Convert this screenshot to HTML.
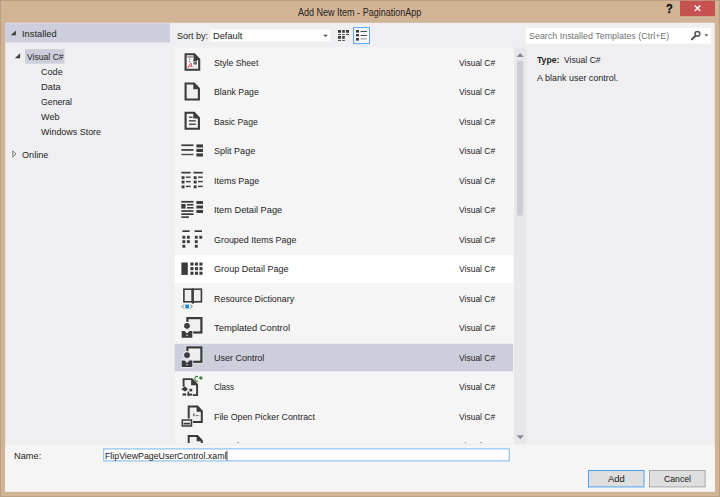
<!DOCTYPE html>
<html><head><meta charset="utf-8"><title>Add New Item</title>
<style>
html,body{margin:0;padding:0;background:#d1b496;}
body{width:720px;height:497px;overflow:hidden;font-family:"Liberation Sans",sans-serif;}
#win{position:relative;width:720px;height:497px;background:#d1b496;overflow:hidden;}
#win div,#win span,#win svg{position:absolute;}
.t{white-space:nowrap;transform-origin:0 0;line-height:12px;font-family:"Liberation Sans",sans-serif;}
#edge{left:0;top:0;width:718px;height:495px;border:1px solid #b9a084;}
#clip13{left:0;top:0;width:720px;height:443.1px;overflow:hidden;}
#help{left:666.1px;top:2.2px;transform-origin:0 0;transform:scaleX(0.88);font-size:12.5px;font-weight:700;-webkit-text-stroke:0.3px #111;line-height:14px;color:#0a0a0a;font-family:"Liberation Sans",sans-serif;}

</style></head>
<body>
<div id="win">
<div id="edge"></div>
<svg id="bg" width="720" height="497" viewBox="0 0 720 497" style="left:0;top:0">
<rect x="5.3" y="22.8" width="709.4" height="468.8" fill="#efeff2"/>
<rect x="680" y="0.8" width="35" height="15.3" fill="#c75050"/>
<rect x="5.3" y="23.3" width="164.8" height="19.2" fill="#cccedb"/>
<rect x="25" y="49.1" width="39.4" height="14.6" fill="#cccedb"/>
<rect x="174.8" y="47.7" width="339.2" height="396" fill="#f5f5f5"/>
<rect x="174.8" y="255.2" width="338.3" height="27.6" fill="#ffffff"/>
<rect x="174.8" y="343.8" width="338.3" height="27.6" fill="#cccedb"/>
<rect x="514" y="47.7" width="12.4" height="396" fill="#e8e8ec"/>
<rect x="517.1" y="60.8" width="6" height="154.8" fill="#cbccd4"/>
<rect x="210.3" y="29.3" width="120.1" height="12.2" fill="#fdfdfd"/>
<rect x="525.9" y="27.9" width="185.1" height="15.8" fill="#ffffff"/>
<rect x="353.5" y="27.6" width="16" height="16" fill="#f7f8fa" stroke="#5aa6f3" stroke-width="1"/>
<rect x="5.3" y="444.9" width="709.4" height="46.7" fill="#f5f5f5"/>
<rect x="103.75" y="448.9" width="405.45" height="12" fill="#ffffff" stroke="#7ab6ef" stroke-width="1"/>
<rect x="226.5" y="450.7" width="0.9" height="9.8" fill="#333"/>
<rect x="588.5" y="470.5" width="55.5" height="16.4" fill="#dedede" stroke="#4fa2f2" stroke-width="1"/>
<rect x="649.5" y="470.5" width="55.6" height="16.4" fill="#dedede" stroke="#a9a9a9" stroke-width="1"/>
</svg>
<svg id="ico" width="720" height="497" viewBox="0 0 720 497" style="left:0;top:0">
<!-- tree arrows -->
<polygon points="15.9,30.4 15.9,35.3 10.7,35.3" fill="#3d3d3d"/>
<polygon points="20.1,53.2 20.1,58.3 14.9,58.3" fill="#3d3d3d"/>
<polygon points="12.8,151 16,154 12.8,157" fill="none" stroke="#6a6a6a" stroke-width="0.9"/>
<!-- close X -->
<path d="M694.8 5.6 L700.3 10.9 M700.3 5.6 L694.8 10.9" stroke="#ffffff" stroke-width="1.4" fill="none"/>
<!-- combo arrow -->
<polygon points="323.2,34.7 327.8,34.7 325.5,37.1" fill="#444"/>
<!-- small icons view -->
<g fill="#3c3c3c">
<rect x="338" y="30" width="3" height="2.8"/><rect x="342.2" y="30" width="2.6" height="2.8"/><rect x="346" y="30" width="3" height="2.8"/>
<rect x="338" y="34" width="3" height="0.9"/><rect x="342.2" y="34" width="2.6" height="0.9"/><rect x="346" y="34" width="3" height="0.9"/>
<rect x="338" y="36" width="3" height="2.8"/><rect x="342.2" y="36" width="2.6" height="2.8"/>
<rect x="338" y="40" width="3" height="0.9"/><rect x="342.2" y="40" width="2.6" height="0.9"/>
</g>
<!-- list view icon -->
<g fill="#3c3c3c">
<rect x="356" y="30" width="3" height="2.6"/><rect x="356" y="34" width="3" height="2.4"/><rect x="356" y="38" width="3" height="2.6"/>
<rect x="360.5" y="31" width="6.5" height="0.9"/><rect x="360.5" y="35" width="6.5" height="0.9"/>
<rect x="360.5" y="38.4" width="6.5" height="1" fill="#999"/>
</g>
<!-- search magnifier -->
<circle cx="697.4" cy="33.8" r="2.4" fill="none" stroke="#555" stroke-width="1.5"/>
<path d="M695.6 35.7 L691.9 39.3" stroke="#555" stroke-width="2.0" stroke-linecap="round"/>
<polygon points="704.4,34.2 708.4,34.2 706.4,36.7" fill="#666"/>
<!-- scroll arrows -->
<polygon points="516.6,57.1 523.8,57.1 520.2,52.9" fill="#868999"/>
<polygon points="516.7,435.2 523.9,435.2 520.3,439.3" fill="#868999"/>
</svg>
<svg id="rico" width="720" height="497" viewBox="0 0 720 497" style="left:0;top:0">
<path d="M185.6 54.2 H194.4 L199.2 59.3 V69.8 H185.6 Z" fill="#fbfbfb" stroke="#3b3b3b" stroke-width="2.1" stroke-linejoin="miter"/>
<path d="M193.6 53.6 L199.7 60.0 H193.6 Z" fill="#3b3b3b"/>
<rect x="187.3" y="56.4" width="6.2" height="1.1" fill="#666"/>
<rect x="189.2" y="58.4" width="1.0" height="1.6" fill="#777"/>
<rect x="189.2" y="60.8" width="1.0" height="1.8" fill="#777"/>
<rect x="193.2" y="59.6" width="4.0" height="1.4" fill="#3f3f3f"/>
<rect x="193.4" y="61.4" width="3.6" height="3.2" fill="#6a6a6a"/>
<rect x="193.2" y="65.8" width="4.0" height="0.6" fill="#c8c8c8"/>
<rect x="193.2" y="67.4" width="4.0" height="0.5" fill="#d5d5d5"/>
<path d="M188.0 67.4 L190.9 63.0 L192.2 67.4 M189.2 66 H191.8" fill="none" stroke="#d8505a" stroke-width="1.0"/>
<rect x="187.4" y="66.6" width="1.6" height="1.0" fill="#e06a70"/>
<path d="M185.6 83.5 H194.1 L198.9 88.6 V99.5 H185.6 Z" fill="#f0f0f0" stroke="#3b3b3b" stroke-width="2.1" stroke-linejoin="miter"/>
<path d="M193.3 82.9 L199.4 89.3 H193.3 Z" fill="#3b3b3b"/>
<path d="M185.6 112.8 H194.1 L198.9 117.9 V128.8 H185.6 Z" fill="#f4f4f4" stroke="#3b3b3b" stroke-width="2.1" stroke-linejoin="miter"/>
<path d="M193.3 112.2 L199.4 118.6 H193.3 Z" fill="#3b3b3b"/>
<rect x="189.0" y="116.6" width="3.6" height="1.3" fill="#3b3b3b"/>
<rect x="189.0" y="120.2" width="6.8" height="1.3" fill="#3b3b3b"/>
<rect x="189.0" y="123.6" width="6.8" height="1.3" fill="#3b3b3b"/>
<rect x="181.3" y="144.4" width="12.2" height="1.7" fill="#3b3b3b"/>
<rect x="181.3" y="149.1" width="12.2" height="1.7" fill="#3b3b3b"/>
<rect x="181.3" y="153.8" width="12.2" height="1.4" fill="#4a4a4a"/>
<rect x="196.4" y="144.4" width="6.6" height="3.1" fill="#3b3b3b"/>
<rect x="196.4" y="148.9" width="6.6" height="3.1" fill="#3b3b3b"/>
<rect x="196.4" y="153.4" width="6.6" height="3.1" fill="#3b3b3b"/>
<rect x="181.3" y="171.8" width="9.4" height="1.7" fill="#3b3b3b"/>
<rect x="181.6" y="176.2" width="2.9" height="2.9" fill="#3b3b3b"/>
<rect x="185.9" y="176.5" width="4.8" height="1.4" fill="#3b3b3b"/>
<rect x="181.6" y="180.6" width="2.9" height="2.9" fill="#3b3b3b"/>
<rect x="185.9" y="180.9" width="4.8" height="1.4" fill="#3b3b3b"/>
<rect x="181.6" y="185.4" width="2.9" height="2.9" fill="#3b3b3b"/>
<rect x="185.9" y="185.7" width="4.8" height="1.4" fill="#3b3b3b"/>
<rect x="193.4" y="171.8" width="9.4" height="1.7" fill="#3b3b3b"/>
<rect x="193.7" y="176.2" width="2.9" height="2.9" fill="#3b3b3b"/>
<rect x="198.0" y="176.5" width="4.8" height="1.4" fill="#3b3b3b"/>
<rect x="193.7" y="180.6" width="2.9" height="2.9" fill="#3b3b3b"/>
<rect x="198.0" y="180.9" width="4.8" height="1.4" fill="#3b3b3b"/>
<rect x="193.7" y="185.4" width="2.9" height="2.9" fill="#3b3b3b"/>
<rect x="198.0" y="185.7" width="4.8" height="1.4" fill="#3b3b3b"/>
<rect x="181.3" y="200.9" width="12.2" height="1.8" fill="#3b3b3b"/>
<rect x="181.3" y="204.0" width="4.3" height="4.6" fill="#3b3b3b"/>
<rect x="187.0" y="204.0" width="6.5" height="1.6" fill="#3b3b3b"/>
<rect x="187.0" y="207.0" width="6.5" height="1.6" fill="#3b3b3b"/>
<rect x="181.3" y="210.2" width="12.2" height="1.7" fill="#3b3b3b"/>
<rect x="181.3" y="213.3" width="12.2" height="1.7" fill="#3b3b3b"/>
<rect x="181.3" y="216.3" width="7.6" height="1.6" fill="#3b3b3b"/>
<rect x="196.4" y="201.0" width="6.6" height="3.0" fill="#3b3b3b"/>
<rect x="196.4" y="205.5" width="6.6" height="3.0" fill="#3b3b3b"/>
<rect x="196.4" y="210.0" width="6.6" height="3.0" fill="#3b3b3b"/>
<rect x="182.4" y="230.3" width="7.2" height="1.7" fill="#3b3b3b"/>
<rect x="194.6" y="230.3" width="7.4" height="1.7" fill="#3b3b3b"/>
<rect x="182.4" y="235.8" width="2.9" height="2.9" fill="#3b3b3b"/>
<rect x="186.9" y="235.8" width="2.9" height="2.9" fill="#3b3b3b"/>
<rect x="182.4" y="240.2" width="2.9" height="2.9" fill="#3b3b3b"/>
<rect x="186.9" y="240.2" width="2.9" height="2.9" fill="#3b3b3b"/>
<rect x="182.4" y="244.8" width="2.9" height="2.9" fill="#3b3b3b"/>
<rect x="194.8" y="235.8" width="2.9" height="2.9" fill="#3b3b3b"/>
<rect x="199.3" y="235.8" width="2.9" height="2.9" fill="#3b3b3b"/>
<rect x="194.8" y="240.2" width="2.9" height="2.9" fill="#3b3b3b"/>
<rect x="194.8" y="244.8" width="2.9" height="2.9" fill="#3b3b3b"/>
<rect x="181.4" y="262.5" width="6.4" height="12.4" fill="#3b3b3b"/>
<rect x="190.4" y="262.5" width="3.1" height="3.1" fill="#3b3b3b"/>
<rect x="190.4" y="267.1" width="3.1" height="3.1" fill="#3b3b3b"/>
<rect x="190.4" y="271.7" width="3.1" height="3.1" fill="#3b3b3b"/>
<rect x="194.9" y="262.5" width="3.1" height="3.1" fill="#3b3b3b"/>
<rect x="194.9" y="267.1" width="3.1" height="3.1" fill="#3b3b3b"/>
<rect x="194.9" y="271.7" width="3.1" height="3.1" fill="#3b3b3b"/>
<rect x="199.4" y="262.5" width="3.1" height="3.1" fill="#3b3b3b"/>
<rect x="199.4" y="267.1" width="3.1" height="3.1" fill="#3b3b3b"/>
<rect x="199.4" y="271.7" width="3.1" height="3.1" fill="#3b3b3b"/>
<rect x="183.9" y="289.2" width="8.4" height="12.6" fill="#efefef" stroke="#3b3b3b" stroke-width="1.6"/>
<rect x="192.9" y="289.2" width="8.5" height="12.6" fill="#efefef" stroke="#3b3b3b" stroke-width="1.6"/>
<rect x="191.7" y="288.6" width="1.9" height="14.6" fill="#3b3b3b"/>
<path d="M191.6 302 L194.6 302 L193 304.2 Z" fill="#3b3b3b"/>
<rect x="185.2" y="304.6" width="3.8" height="3.8" fill="#1a8ad8"/>
<path d="M183.9 304.6 L182 306.5 L183.9 308.4 M190.3 304.6 L192.2 306.5 L190.3 308.4" fill="none" stroke="#555" stroke-width="0.9"/>
<rect x="187.4" y="318.1" width="14" height="14.4" fill="#efefef" stroke="#3b3b3b" stroke-width="2.2"/>
<circle cx="187" cy="325.8" r="4.0" fill="#f5f5f5"/>
<rect x="180.8" y="329.6" width="12.4" height="9.1" fill="#f5f5f5"/>
<circle cx="187" cy="325.8" r="2.9" fill="#3b3b3b"/>
<path d="M181.7 331.1 H184.6 L187 333.6 L189.4 331.1 H192.3 V337.8 H181.7 Z" fill="#3b3b3b"/>
<rect x="186.4" y="334.7" width="1.3" height="1.3" fill="#e8e8e8"/>
<rect x="185.5" y="345.5" width="17.8" height="18.2" fill="#e4e5ec"/>
<rect x="187.4" y="347.4" width="14" height="14.4" fill="#efefef" stroke="#3b3b3b" stroke-width="2.2"/>
<circle cx="187" cy="355.1" r="4.0" fill="#e4e5ec"/>
<rect x="180.8" y="358.9" width="12.4" height="9.1" fill="#e4e5ec"/>
<circle cx="187" cy="355.1" r="2.9" fill="#3b3b3b"/>
<path d="M181.7 360.4 H184.6 L187 362.9 L189.4 360.4 H192.3 V367.1 H181.7 Z" fill="#3b3b3b"/>
<rect x="186.4" y="364.0" width="1.3" height="1.3" fill="#e8e8e8"/>
<path d="M183.6 379.1 H191.9 L197.1 384.6 V395.1 H183.6 Z" fill="#f0f0f0" stroke="#3b3b3b" stroke-width="1.9" stroke-linejoin="miter"/>
<path d="M191.1 378.5 L197.6 385.3 H191.1 Z" fill="#3b3b3b"/>
<rect x="181.0" y="386.6" width="11.8" height="9.9" fill="#f5f5f5"/>
<path d="M181.3 389.2 L185 386.2 L188 389.2 L185 391.6 Z" fill="#3b3b3b"/>
<rect x="182.6" y="393.4" width="3.6" height="2.2" fill="#3b3b3b"/>
<rect x="187.6" y="391.6" width="1.5" height="4.2" fill="#3b3b3b"/>
<rect x="187.6" y="393.6" width="4.6" height="2.0" fill="#3b3b3b"/>
<rect x="189.4" y="388.8" width="2.8" height="2.6" fill="#3b3b3b"/>
<path d="M198.0 376.9 A2.0 2.5 0 1 0 198.0 380.9" fill="none" stroke="#38883a" stroke-width="1.1"/>
<circle cx="200.9" cy="378" r="1.7" fill="#38883a"/>
<path d="M188.7 406.4 H197.4 L201.8 411.1 V422.1 H188.7 Z" fill="#f0f0f0" stroke="#3b3b3b" stroke-width="2.0" stroke-linejoin="miter"/>
<path d="M196.6 405.8 L202.3 411.8 H196.6 Z" fill="#3b3b3b"/>
<rect x="193.0" y="413.6" width="1.6" height="2.6" fill="#777"/>
<rect x="195.6" y="415.0" width="3.2" height="1.1" fill="#888"/>
<rect x="180.6" y="418.4" width="12.4" height="8.8" fill="#f5f5f5"/>
<rect x="182.3" y="420.0" width="9.2" height="6" fill="#f3f3f3" stroke="#3b3b3b" stroke-width="1.5"/>
<rect x="183.6" y="422.8" width="6.6" height="1.7" fill="#3b3b3b"/>
</svg>

<span class="t" style="left:298.20px;top:5.5px;font-size:10.5px;transform:scaleX(0.8586);color:#28231d;font-weight:400;">Add New Item - PaginationApp</span>
<span class="t" style="left:22.12px;top:27.9px;font-size:9.5px;transform:scaleX(0.9778);color:#242424;font-weight:400;">Installed</span>
<span class="t" style="left:26.57px;top:50.9px;font-size:9.5px;transform:scaleX(0.9043);color:#242424;font-weight:400;">Visual C#</span>
<span class="t" style="left:40.62px;top:65.9px;font-size:9.5px;transform:scaleX(0.9563);color:#242424;font-weight:400;">Code</span>
<span class="t" style="left:40.66px;top:80.9px;font-size:9.5px;transform:scaleX(0.9818);color:#242424;font-weight:400;">Data</span>
<span class="t" style="left:40.64px;top:95.9px;font-size:9.5px;transform:scaleX(0.9191);color:#242424;font-weight:400;">General</span>
<span class="t" style="left:41.30px;top:110.9px;font-size:9.5px;transform:scaleX(0.9579);color:#242424;font-weight:400;">Web</span>
<span class="t" style="left:41.30px;top:125.9px;font-size:9.5px;transform:scaleX(0.9402);color:#242424;font-weight:400;">Windows Store</span>
<span class="t" style="left:22.42px;top:148.9px;font-size:9.5px;transform:scaleX(0.9585);color:#242424;font-weight:400;">Online</span>
<span class="t" style="left:177.03px;top:29.9px;font-size:9.5px;transform:scaleX(0.9460);color:#242424;font-weight:400;">Sort by:</span>
<span class="t" style="left:213.27px;top:29.9px;font-size:9.5px;transform:scaleX(0.9744);color:#242424;font-weight:400;">Default</span>
<span class="t" style="left:529.13px;top:29.9px;font-size:9.5px;transform:scaleX(0.9380);color:#747474;font-weight:400;">Search Installed Templates (Ctrl+E)</span>
<span class="t" style="left:536.70px;top:53.9px;font-size:9.5px;transform:scaleX(0.9053);color:#1e1e1e;font-weight:700;">Type:</span>
<span class="t" style="left:564.47px;top:53.9px;font-size:9.5px;transform:scaleX(0.9043);color:#242424;font-weight:400;">Visual C#</span>
<span class="t" style="left:536.70px;top:71.9px;font-size:9.5px;transform:scaleX(0.9443);color:#242424;font-weight:400;">A blank user control.</span>
<span class="t" style="left:14.07px;top:449.9px;font-size:9.5px;transform:scaleX(0.9752);color:#242424;font-weight:400;">Name:</span>
<span class="t" style="left:104.51px;top:449.9px;font-size:9.5px;transform:scaleX(0.9246);color:#161616;font-weight:400;">FlipViewPageUserControl.xaml</span>
<span class="t" style="left:607.50px;top:472.9px;font-size:9.5px;transform:scaleX(0.9969);color:#161616;font-weight:400;">Add</span>
<span class="t" style="left:663.54px;top:472.9px;font-size:9.5px;transform:scaleX(0.9123);color:#161616;font-weight:400;">Cancel</span>
<span class="t" style="left:214.24px;top:56.9px;font-size:9.5px;transform:scaleX(0.9125);color:#242424;font-weight:400;">Style Sheet</span>
<span class="t" style="left:458.78px;top:56.9px;font-size:9.5px;transform:scaleX(0.8944);color:#242424;font-weight:400;">Visual C#</span>
<span class="t" style="left:214.01px;top:85.9px;font-size:9.5px;transform:scaleX(0.9221);color:#242424;font-weight:400;">Blank Page</span>
<span class="t" style="left:458.78px;top:85.9px;font-size:9.5px;transform:scaleX(0.8944);color:#242424;font-weight:400;">Visual C#</span>
<span class="t" style="left:214.02px;top:115.9px;font-size:9.5px;transform:scaleX(0.9112);color:#242424;font-weight:400;">Basic Page</span>
<span class="t" style="left:458.78px;top:115.9px;font-size:9.5px;transform:scaleX(0.8944);color:#242424;font-weight:400;">Visual C#</span>
<span class="t" style="left:214.22px;top:144.9px;font-size:9.5px;transform:scaleX(0.9515);color:#242424;font-weight:400;">Split Page</span>
<span class="t" style="left:458.78px;top:144.9px;font-size:9.5px;transform:scaleX(0.8944);color:#242424;font-weight:400;">Visual C#</span>
<span class="t" style="left:213.76px;top:174.9px;font-size:9.5px;transform:scaleX(0.9419);color:#242424;font-weight:400;">Items Page</span>
<span class="t" style="left:458.78px;top:174.9px;font-size:9.5px;transform:scaleX(0.8944);color:#242424;font-weight:400;">Visual C#</span>
<span class="t" style="left:213.73px;top:203.9px;font-size:9.5px;transform:scaleX(0.9702);color:#242424;font-weight:400;">Item Detail Page</span>
<span class="t" style="left:458.78px;top:203.9px;font-size:9.5px;transform:scaleX(0.8944);color:#242424;font-weight:400;">Visual C#</span>
<span class="t" style="left:214.23px;top:233.9px;font-size:9.5px;transform:scaleX(0.9406);color:#242424;font-weight:400;">Grouped Items Page</span>
<span class="t" style="left:458.78px;top:233.9px;font-size:9.5px;transform:scaleX(0.8944);color:#242424;font-weight:400;">Visual C#</span>
<span class="t" style="left:214.22px;top:262.9px;font-size:9.5px;transform:scaleX(0.9553);color:#242424;font-weight:400;">Group Detail Page</span>
<span class="t" style="left:458.78px;top:262.9px;font-size:9.5px;transform:scaleX(0.8944);color:#242424;font-weight:400;">Visual C#</span>
<span class="t" style="left:214.00px;top:292.9px;font-size:9.5px;transform:scaleX(0.9369);color:#242424;font-weight:400;">Resource Dictionary</span>
<span class="t" style="left:458.78px;top:292.9px;font-size:9.5px;transform:scaleX(0.8944);color:#242424;font-weight:400;">Visual C#</span>
<span class="t" style="left:214.45px;top:321.9px;font-size:9.5px;transform:scaleX(0.9862);color:#242424;font-weight:400;">Templated Control</span>
<span class="t" style="left:458.78px;top:321.9px;font-size:9.5px;transform:scaleX(0.8944);color:#242424;font-weight:400;">Visual C#</span>
<span class="t" style="left:213.99px;top:351.9px;font-size:9.5px;transform:scaleX(0.9442);color:#242424;font-weight:400;">User Control</span>
<span class="t" style="left:458.78px;top:351.9px;font-size:9.5px;transform:scaleX(0.8944);color:#242424;font-weight:400;">Visual C#</span>
<span class="t" style="left:214.28px;top:380.9px;font-size:9.5px;transform:scaleX(0.8478);color:#242424;font-weight:400;">Class</span>
<span class="t" style="left:458.78px;top:380.9px;font-size:9.5px;transform:scaleX(0.8944);color:#242424;font-weight:400;">Visual C#</span>
<span class="t" style="left:214.00px;top:410.9px;font-size:9.5px;transform:scaleX(0.9278);color:#242424;font-weight:400;">File Open Picker Contract</span>
<span class="t" style="left:458.78px;top:410.9px;font-size:9.5px;transform:scaleX(0.8944);color:#242424;font-weight:400;">Visual C#</span>
<div id="clip13"><svg width="720" height="497" viewBox="0 0 720 497" style="left:0;top:0">
<path d="M188.7 435.9 H197.4 L201.8 440.6 V451.6 H188.7 Z" fill="#f0f0f0" stroke="#3b3b3b" stroke-width="2.0" stroke-linejoin="miter"/>
<path d="M196.6 435.3 L202.3 441.3 H196.6 Z" fill="#3b3b3b"/>
<rect x="193.0" y="443.1" width="1.6" height="2.6" fill="#777"/>
<rect x="195.6" y="444.5" width="3.2" height="1.1" fill="#888"/>
<rect x="180.6" y="447.9" width="12.4" height="8.8" fill="#f5f5f5"/>
<rect x="182.3" y="449.5" width="9.2" height="6" fill="#f3f3f3" stroke="#3b3b3b" stroke-width="1.5"/>
<rect x="183.6" y="452.3" width="6.6" height="1.7" fill="#3b3b3b"/>
</svg><span class="t" style="left:214.24px;top:439.9px;font-size:9.5px;transform:scaleX(0.9235);color:#242424;font-weight:400;">Search Contract</span>
<span class="t" style="left:458.78px;top:439.9px;font-size:9.5px;transform:scaleX(0.8944);color:#242424;font-weight:400;">Visual C#</span></div>

<span id="help">?</span>
</div>
</body></html>
